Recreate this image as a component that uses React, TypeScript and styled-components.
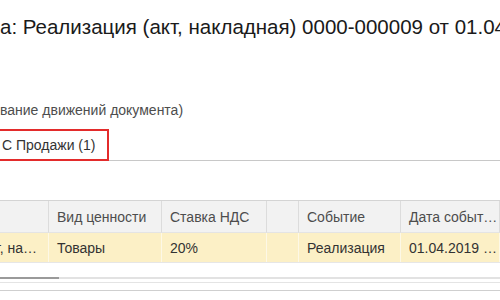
import styled, { createGlobalStyle } from "styled-components";

const GlobalStyle = createGlobalStyle`
  body {
    margin: 0;
    background: #fff;
    font-family: "Liberation Sans", Arial, sans-serif;
    overflow: hidden;
  }
`;

const Page = styled.div`
  width: 500px;
  height: 300px;
  overflow: hidden;
  display: flex;
  flex-direction: column;
`;

const Title = styled.h1`
  margin: 15px 0 0;
  font-size: 20.5px;
  font-weight: normal;
  line-height: 24px;
  color: #1a1a1a;
  white-space: nowrap;
`;

const Note = styled.div`
  margin-top: 63px;
  font-size: 14px;
  line-height: 16px;
  color: #4d4d4d;
  white-space: nowrap;
`;

const TabBar = styled.div`
  margin-top: 11px;
  display: flex;
  border-bottom: 1px solid #c8c8c8;
  height: 31px;
`;

const Tab = styled.div`
  border: 2px solid #e32b2b;
  border-left: none;
  padding: 0 12px 0 2px;
  display: flex;
  align-items: center;
  font-size: 14px;
  color: #333;
  white-space: nowrap;
  margin-bottom: -1px;
`;

const Grid = styled.div`
  margin-top: 39px;
  display: grid;
  grid-template-columns: 49px 113px 105px 15px 17px 102px 1fr;
  border-top: 1px solid #d4d4d4;
  border-bottom: 1px solid #e6e6e6;
`;

const Cell = styled.div<{ $head?: boolean }>`
  height: ${(p) => (p.$head ? "32px" : "29px")};
  box-sizing: border-box;
  padding: 0 8px;
  display: flex;
  align-items: center;
  font-size: 14px;
  white-space: nowrap;
  overflow: hidden;
  background: ${(p) => (p.$head ? "#f2f2f2" : "#fcf0c6")};
  color: ${(p) => (p.$head ? "#4d4d4d" : "#333")};
  border-right: 1px solid ${(p) => (p.$head ? "#dcdcdc" : "#fdf8e6")};
  border-bottom: ${(p) => (p.$head ? "1px solid #e4e4e4" : "none")};
`;

const Lead = styled(Cell)`
  justify-content: flex-end;
  padding-right: 11px;
`;

const Scroll = styled.div`
  margin-top: 14px;
  height: 2px;
  background: #e2e2e2;
  display: flex;
`;

const Thumb = styled.div`
  width: 59px;
  background: #9a9a9a;
`;

const Rule = styled.div<{ $gap: number; $tone: string }>`
  margin-top: ${(p) => p.$gap}px;
  height: 1px;
  background: ${(p) => p.$tone};
`;

const head = ["", "Вид ценности", "Ставка НДС", "", "", "Событие", "Дата событ…"];
const row = ["т, на…", "Товары", "20%", "", "", "Реализация", "01.04.2019 …"];

export default function App() {
  return (
    <Page>
      <GlobalStyle />
      <Title>а: Реализация (акт, накладная) 0000-000009 от 01.04.2019 12:00:00</Title>
      <Note>вание движений документа)</Note>
      <TabBar>
        <Tab>С Продажи (1)</Tab>
      </TabBar>
      <Grid>
        {head.map((h, i) => (
          <Cell $head key={"h" + i}>{h}</Cell>
        ))}
        {row.map((c, i) =>
          i === 0 ? <Lead key={"r" + i}>{c}</Lead> : <Cell key={"r" + i}>{c}</Cell>
        )}
      </Grid>
      <Scroll>
        <Thumb />
      </Scroll>
      <Rule $gap={3} $tone="#e4e4e4" />
      <Rule $gap={7} $tone="#cfcfcf" />
    </Page>
  );
}
